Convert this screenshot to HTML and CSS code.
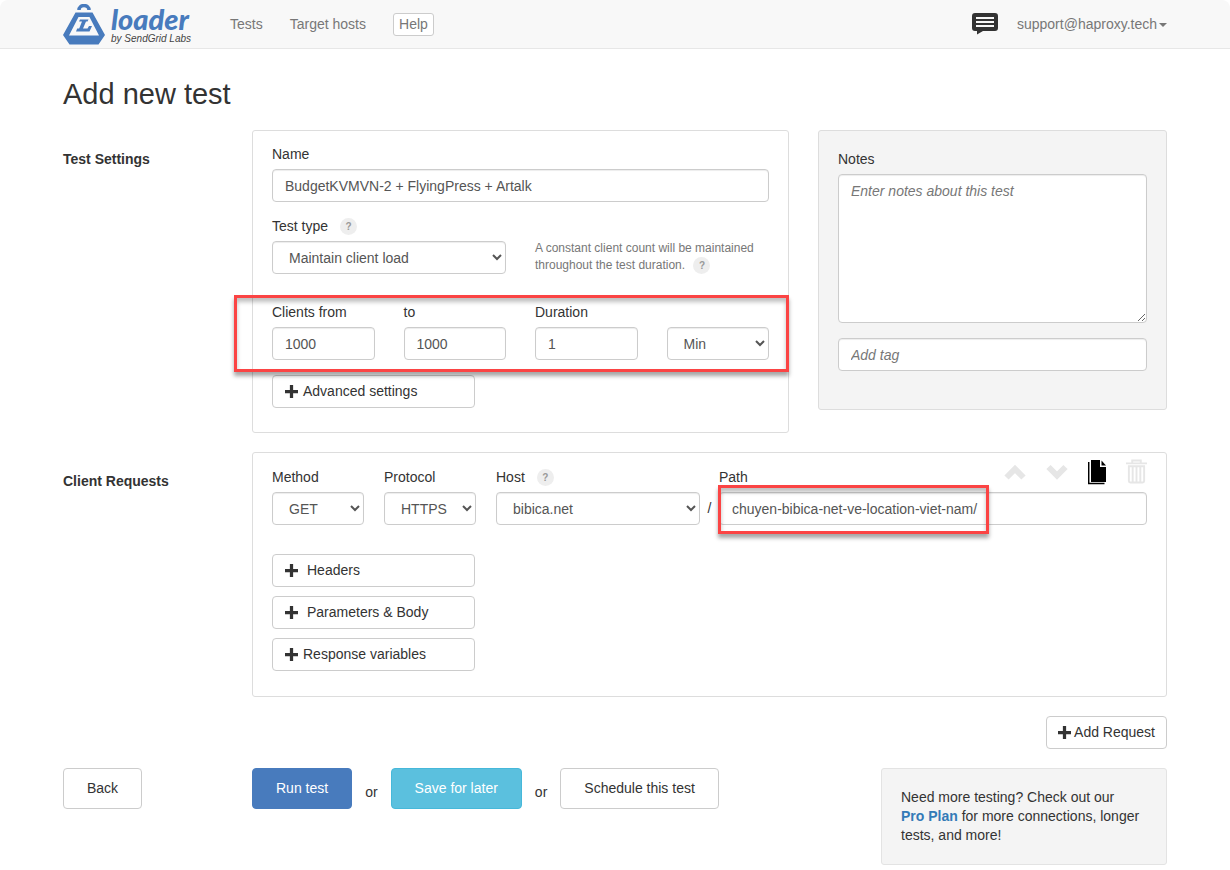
FILE: index.html
```html
<!DOCTYPE html>
<html lang="en">
<head>
<meta charset="utf-8">
<title>Add new test - Loader</title>
<link rel="stylesheet" href="styles.css">
</head>
<body>
<header class="navbar">
  <a class="brand" href="#" aria-label="loader by SendGrid Labs">
    <svg class="brand-mark" viewBox="0 0 42 41" aria-hidden="true">
      <path d="M16 6a5 4.500 0 0 1 10 0" fill="none" stroke="#487bbd" stroke-width="3.500"/>
      <path fill="#487bbd" fill-rule="evenodd" d="M12.500 8.500h17l12.500 22.500-6.500 9.500h-29L0 31zM15.500 13L6 31.500h30L26.500 13z"/>
      <path fill="#487bbd" d="M17 15.500h8.500l-1 2h-1.500L20 24.500h4.500l1.500-2.500h3l-2.500 5.500H13l1.200-3h2L19 17.500h-3z"/>
    </svg>
    <span class="brand-text">
      <span class="brand-name">loader</span>
      <span class="brand-sub">by SendGrid Labs</span>
    </span>
  </a>
  <nav class="nav">
    <a href="#">Tests</a>
    <a href="#">Target hosts</a>
    <button class="help" type="button">Help</button>
  </nav>
  <div class="account">
    <button class="icon-btn" type="button" aria-label="Messages">
      <svg width="26" height="22" viewBox="0 0 26 22"><path fill="#333" d="M3 0h20a3 3 0 0 1 3 3v12a3 3 0 0 1-3 3H11l-6 3.500V18H3a3 3 0 0 1-3-3V3a3 3 0 0 1 3-3z"/><path d="M4 5h18M4 9h18M4 13h18" stroke="#f8f8f8" stroke-width="2"/></svg>
    </button>
    <a href="#">support@haproxy.tech<span class="caret"></span></a>
  </div>
</header>

<main class="page">
  <h1>Add new test</h1>

  <section class="row">
    <h2>Test Settings</h2>
    <div class="settings">
      <div class="card">
        <div class="field">
          <label for="name">Name</label>
          <input class="control" id="name" type="text" value="BudgetKVMVN-2 + FlyingPress + Artalk">
        </div>
        <div class="quad">
          <div class="field span-2">
            <div class="label-line"><label for="type">Test type</label><button class="hint" type="button">?</button></div>
            <select class="control" id="type"><option>Maintain client load</option></select>
          </div>
          <p class="description span-2">A constant client count will be maintained throughout the test duration. <button class="hint" type="button">?</button></p>
        </div>
        <div class="quad clients">
          <div class="field"><label for="from">Clients from</label><input class="control" id="from" type="text" value="1000"></div>
          <div class="field"><label for="to">to</label><input class="control" id="to" type="text" value="1000"></div>
          <div class="field"><label for="duration">Duration</label><input class="control" id="duration" type="text" value="1"></div>
          <div class="field"><select class="control" aria-label="Duration unit"><option>Min</option></select></div>
          <div class="marker marker-clients"></div>
        </div>
        <button class="btn expand" type="button"><svg class="plus" viewBox="0 0 12 12"><path d="M6 0v12M0 6h12"/></svg>Advanced settings</button>
      </div>
      <aside class="card notes">
        <div class="field">
          <label for="notes">Notes</label>
          <textarea class="control" id="notes" placeholder="Enter notes about this test"></textarea>
        </div>
        <input class="control" type="text" placeholder="Add tag" aria-label="Add tag">
      </aside>
    </div>
  </section>

  <section class="row">
    <h2>Client Requests</h2>
    <div class="card requests">
      <div class="request">
        <div class="target">
          <div class="field"><label for="method">Method</label><select class="control" id="method"><option>GET</option></select></div>
          <div class="field"><label for="protocol">Protocol</label><select class="control" id="protocol"><option>HTTPS</option></select></div>
          <div class="field">
            <div class="label-line"><label for="host">Host</label><button class="hint" type="button">?</button></div>
            <select class="control" id="host"><option>bibica.net</option></select>
          </div>
        </div>
        <span class="slash">/</span>
        <div class="field">
          <div class="path-head">
            <label for="path">Path</label>
            <div class="tools">
              <button class="icon-btn" type="button" aria-label="Move up"><svg width="22" height="26" viewBox="0 0 22 26"><path d="M2.500 18.500l8.500-8.500 8.500 8.500" fill="none" stroke="#e6e6e6" stroke-width="6"/></svg></button>
              <button class="icon-btn" type="button" aria-label="Move down"><svg width="22" height="26" viewBox="0 0 22 26"><path d="M2.500 8l8.500 8.500 8.500-8.500" fill="none" stroke="#e6e6e6" stroke-width="6"/></svg></button>
              <button class="icon-btn" type="button" aria-label="Duplicate"><svg width="18" height="26" viewBox="0 0 18 26"><path d="M3 1h9v7h6v15H3z"/><path d="M13.500 1.500V6.500H18z"/><path d="M.700 3v21.500H16.500" fill="none" stroke="#000" stroke-width="1.500"/></svg></button>
              <button class="icon-btn" type="button" aria-label="Delete"><svg width="21" height="26" viewBox="0 0 22 26" fill="none" stroke="#e6e6e6" stroke-width="2"><path d="M0 4h22M6.500 3.500V1h9v2.500M3 7v15.500a1.500 1.500 0 0 0 1.500 1.500h13a1.500 1.500 0 0 0 1.500-1.500V7zM7 7v17M11 7v17M15 7v17"/></svg></button>
            </div>
          </div>
          <div class="path-box">
            <input class="control" id="path" type="text" value="chuyen-bibica-net-ve-location-viet-nam/">
            <div class="marker marker-path"></div>
          </div>
        </div>
      </div>
      <div class="expanders">
        <button class="btn expand wide" type="button"><svg class="plus" viewBox="0 0 12 12"><path d="M6 0v12M0 6h12"/></svg>Headers</button>
        <button class="btn expand wide" type="button"><svg class="plus" viewBox="0 0 12 12"><path d="M6 0v12M0 6h12"/></svg>Parameters &amp; Body</button>
        <button class="btn expand" type="button"><svg class="plus" viewBox="0 0 12 12"><path d="M6 0v12M0 6h12"/></svg>Response variables</button>
      </div>
    </div>
  </section>

  <div class="add-line">
    <button class="btn add" type="button"><svg class="plus" viewBox="0 0 12 12"><path d="M6 0v12M0 6h12"/></svg>Add Request</button>
  </div>

  <footer class="row">
    <div><button class="btn large" type="button">Back</button></div>
    <div class="finish">
      <div class="actions">
        <button class="btn large primary" type="submit">Run test</button>
        <span class="or">or</span>
        <button class="btn large info" type="button">Save for later</button>
        <span class="or">or</span>
        <button class="btn large" type="button">Schedule this test</button>
      </div>
      <p class="promo">Need more testing? Check out our <a href="#">Pro Plan</a> for more connections, longer tests, and more!</p>
    </div>
  </footer>
</main>
</body>
</html>
```
FILE: styles.css
```css
* { box-sizing: border-box; }

body {
  margin: 0;
  background: #fff;
  color: #333;
  font: 14px/19px "Liberation Sans", Arial, sans-serif;
}

button, input, select, textarea { font: inherit; color: inherit; }
button { cursor: pointer; }
a { color: #777; text-decoration: none; }
p { margin: 0; }

/* Top bar */
.navbar {
  display: flex;
  align-items: center;
  height: 49px;
  padding: 0 63px;
  background: #f8f8f8;
  border-bottom: 1px solid #e7e7e7;
  border-radius: 8px 8px 0 0;
}
.brand { display: flex; gap: 6px; }
.brand-mark { width: 42px; height: 41px; }
.brand-text { display: flex; flex-direction: column; }
.brand-name {
  color: #487bbd;
  font: italic 900 29px/30px Lato, sans-serif;
}
.brand-sub { color: #444; font-size: 10px; font-style: italic; line-height: 10px; }
.nav { display: flex; align-items: center; gap: 27px; margin-left: 39px; }
.help {
  padding: 1px 5px;
  background: #fff;
  border: 1px solid #ccc;
  border-radius: 3px;
  color: #777;
}
.account { display: flex; align-items: center; gap: 19px; margin-left: auto; }
.icon-btn { display: flex; padding: 0; background: none; border: 0; }
.caret {
  display: inline-block;
  margin-left: 2px;
  vertical-align: middle;
  border: 4px solid transparent;
  border-top-color: #777;
  border-bottom: 0;
}

/* Page grid */
.page { padding: 28px 63px 4px; }
h1 { margin: 0 0 18px; font-size: 29px; font-weight: normal; line-height: 35px; }
.row {
  display: grid;
  grid-template-columns: 189px minmax(0, 1fr);
  margin-bottom: 19px;
}
h2 { margin: 0; padding-top: 20px; font-size: 14px; line-height: 19px; }
.settings {
  display: grid;
  grid-template-columns: 537fr 349fr;
  gap: 29px;
  align-items: start;
}
.card { padding: 14px 19px 24px; border: 1px solid #ddd; border-radius: 3px; }
.notes { padding: 19px 19px 38px; background: #f4f4f4; }

/* Form fields */
.field { display: flex; flex-direction: column; gap: 5px; min-width: 0; }
.label-line { display: flex; align-items: center; gap: 12px; height: 19px; }
.control {
  width: 100%;
  height: 33px;
  padding: 5px 12px;
  background: #fff;
  border: 1px solid #ccc;
  border-radius: 4px;
  color: #555;
  box-shadow: inset 0 1px 1px rgba(0, 0, 0, .075);
}
.control::placeholder { color: #777; font-style: italic; }
textarea.control { height: 149px; padding-top: 7px; resize: vertical; }
.notes .field { margin-bottom: 15px; }
.hint {
  width: 17px;
  height: 17px;
  padding: 0;
  background: #eee;
  border: 0;
  border-radius: 50%;
  color: #999;
  font-size: 10px;
  font-weight: bold;
  line-height: 17px;
}
.quad {
  display: grid;
  grid-template-columns: repeat(4, minmax(0, 1fr));
  gap: 29px;
  margin-top: 15px;
}
.span-2 { grid-column: span 2; }
.description { padding-top: 23px; color: #777; font-size: 12px; line-height: 17px; }
.description .hint { margin-left: 5px; }
.clients { position: relative; align-items: end; margin: 29px 0 15px; }

/* Highlight frames */
.marker {
  position: absolute;
  border: 3px solid #fb4444;
  box-shadow: 0 4px 4px rgba(0, 0, 0, .35), inset 0 4px 4px rgba(0, 0, 0, .25);
  pointer-events: none;
}
.marker-clients { inset: -8px -20px -12px -38px; }
.marker-path { top: -7px; bottom: -9px; left: -1px; width: 271px; }

/* Buttons */
.btn {
  height: 33px;
  padding: 0 12px;
  background: #fff;
  border: 1px solid #ccc;
  border-radius: 4px;
}
.expand { display: flex; align-items: center; gap: 5px; width: 203px; }
.wide { gap: 9px; }
.plus { width: 13px; height: 13px; fill: none; stroke: #333; stroke-width: 3; }
.add { display: flex; align-items: center; gap: 3px; padding: 0 11px; }
.large { height: 41px; padding: 0 23px; }
.primary { background: #487bbd; border-color: #487bbd; color: #fff; }
.info { background: #5bc0de; border-color: #46b8da; color: #fff; }

/* Request card */
.requests { padding-top: 6px; padding-bottom: 25px; }
.request {
  display: grid;
  grid-template-columns: minmax(0, 1fr) 19px minmax(0, 1fr);
  align-items: end;
}
.target { display: grid; grid-template-columns: 92fr 92fr 204fr; gap: 20px; }
.slash { padding-bottom: 7px; text-align: center; }
.path-head { display: flex; align-items: flex-end; justify-content: space-between; height: 28px; }
.tools { display: flex; gap: 20px; align-self: flex-start; }
.path-box { position: relative; display: flex; }
.expanders { display: grid; gap: 9px; margin-top: 29px; }
.add-line { display: flex; justify-content: flex-end; margin-bottom: 19px; }

/* Footer */
footer.row { margin-bottom: 0; }
.finish { display: flex; justify-content: space-between; align-items: flex-start; }
.actions { display: flex; gap: 13px; }
.or { padding-top: 15px; }
.promo {
  width: 286px;
  padding: 19px;
  background: #f4f4f4;
  border: 1px solid #e3e3e3;
  border-radius: 3px;
}
.promo a { color: #337ab7; font-weight: bold; white-space: nowrap; }
```
